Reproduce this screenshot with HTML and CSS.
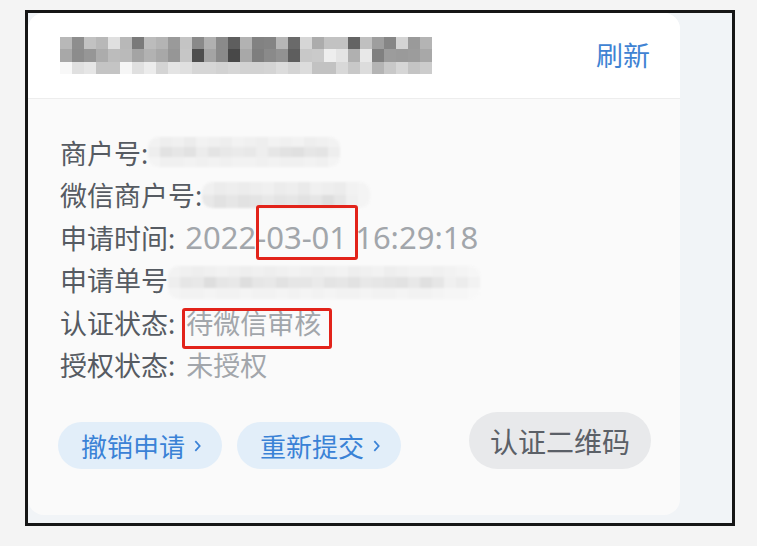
FILE: index.html
```html
<!DOCTYPE html>
<html lang="zh-CN">

<head>
    <meta charset="UTF-8">
    <meta name="viewport" content="width=device-width, initial-scale=1.0">
    <title>商户认证</title>
    <link rel="stylesheet" href="styles.css">
</head>

<body>
    <div class="frame">
        <div class="card">
            <div class="card-head">
                <div class="mosaic mosaic-title" id="titleMosaic"></div>
                <a class="refresh">刷新</a>
            </div>

            <div class="card-body">
                <div class="row">
                    <span class="label">商户号:</span>
                    <span class="mosaic mosaic-soft" id="mchMosaic"></span>
                </div>
                <div class="row">
                    <span class="label">微信商户号:</span>
                    <span class="mosaic mosaic-soft" id="wxMosaic"></span>
                </div>
                <div class="row">
                    <span class="label">申请时间:</span>
                    <span class="value value-num">2022<span class="mark mark-date">-03-01</span> 16:29:18</span>
                </div>
                <div class="row">
                    <span class="label">申请单号</span>
                    <span class="mosaic mosaic-soft" id="applyMosaic"></span>
                </div>
                <div class="row">
                    <span class="label">认证状态:</span>
                    <span class="value"><span class="mark mark-status">待微信审核</span></span>
                </div>
                <div class="row">
                    <span class="label">授权状态:</span>
                    <span class="value">未授权</span>
                </div>

                <div class="actions">
                    <button class="pill">撤销申请
                        <svg class="chevron" viewBox="0 0 10 16" width="10" height="16">
                            <path d="M2.5 2.5 L7.5 8 L2.5 13.5" />
                        </svg>
                    </button>
                    <button class="pill">重新提交
                        <svg class="chevron" viewBox="0 0 10 16" width="10" height="16">
                            <path d="M2.5 2.5 L7.5 8 L2.5 13.5" />
                        </svg>
                    </button>
                    <button class="pill pill-gray">认证二维码</button>
                </div>
            </div>
        </div>
    </div>

    <script>
        // grey levels of the pixelated (masked) texts, one string per row
        const mosaics = {
            titleMosaic: [
                'b8 8e c2 b8 e0 b8 7a bc b4 9a c4 8a b0 8a 5e b2 82 84 b6 6a d6 ac c2 c2 64 c0 9e 86 d4 9a b4',
                'a8 8c 96 ac bc ba a4 b2 a8 96 c6 4e a4 8a 48 a8 7e 8a 92 5e c8 ca ee e4 b0 e8 80 9c 9a 9c a8',
                'f8 e0 e6 c4 c4 f6 e0 ec d4 e4 e0 d6 d6 d2 d6 d2 d2 d4 dc d4 dc c2 c2 d8 c8 dc b4 c8 d6 c4 cc'
            ],
            mchMosaic: [
                'f2 ee f0 ec f2 f0 ee f2 f0 ee f2 f0 f2 ee f0 f2',
                'ee e2 e6 e2 ec e4 e8 ea e8 ee e6 e2 e0 e6 e4 ee',
                'f4 f0 f0 f2 f0 f2 f0 f2 f2 f0 f2 f0 f0 f2 f0 f4'
            ],
            wxMosaic: [
                'f0 ec ee ec ee f0 ec ee ea f0 ee ec f2 f4',
                'e8 e2 e6 e2 e4 e8 e4 e6 e2 e6 de e6 f0 f4'
            ],
            applyMosaic: [
                'f2 f0 ee f0 f2 f0 ee f0 ee f0 f2 f0 ee f0 f2 ee f0 f2 ee f0 f2 f2 f0 f2 f4 f6',
                'ee e6 e8 de e6 e8 de e6 e8 e2 e6 e6 ea e4 e6 e2 e8 e6 e4 e2 e8 e0 e6 f0 ec f2',
                'f4 f2 f2 f4 f2 f2 f4 f2 f2 f4 f2 f4 f2 f4 f2 f2 f4 f2 f2 f4 f2 f2 f4 f6 f6 f8'
            ]
        };

        Object.keys(mosaics).forEach((id) => {
            const box = document.getElementById(id);
            mosaics[id].forEach((line) => {
                const row = document.createElement('span');
                row.className = 'mosaic-row';
                line.split(' ').forEach((hex) => {
                    const cell = document.createElement('span');
                    cell.className = 'mosaic-cell';
                    cell.style.background = '#' + hex + hex + hex;
                    row.appendChild(cell);
                });
                box.appendChild(row);
            });
        });
    </script>
</body>

</html>
```

FILE: styles.css
```css
body {
    margin: 0;
    background: #f4f4f4;
    font-family: "Noto Sans", "Noto Sans CJK SC", sans-serif;
}

.frame {
    width: 704px;
    height: 510px;
    margin: 10px 0 0 25px;
    border: 3px solid #161616;
    background: #f1f4f7;
}

.card {
    width: 652px;
    height: 502px;
    background: #fafafa;
    border-radius: 16px;
    overflow: hidden;
}

.card-head {
    height: 85px;
    display: flex;
    justify-content: space-between;
    align-items: center;
    padding: 0 30px 0 32px;
    background: #fff;
    border-bottom: 1px solid #ededed;
}

.refresh {
    font-size: 27px;
    color: #3f83d3;
    line-height: 1;
}

/* pixelated masked text */
.mosaic {
    display: inline-flex;
    flex-direction: column;
    vertical-align: middle;
}

.mosaic-row {
    display: flex;
}

.mosaic-title .mosaic-cell {
    width: 12px;
    height: 12.5px;
}

.mosaic-soft {
    border-radius: 10px;
    overflow: hidden;
    filter: blur(1px);
}

.mosaic-soft .mosaic-cell {
    width: 12px;
    height: 10px;
}

#wxMosaic .mosaic-cell {
    height: 13px;
}

#applyMosaic {
    margin-top: 6px;
}

#applyMosaic .mosaic-cell {
    height: 11px;
}

.card-body {
    padding: 32px 29px 0 32px;
}

.row {
    height: 42.5px;
    display: flex;
    align-items: center;
    font-size: 27px;
    white-space: pre;
}

.label {
    color: #565b62;
}

.value {
    margin-left: 11px;
    color: #a2a6ab;
}

.value-num {
    margin-left: 10px;
    font-size: 31px;
    line-height: 1;
}

.mark {
    position: relative;
}

.mark::after {
    content: "";
    position: absolute;
    border: 3px solid #e2231a;
    border-radius: 3px;
}

.mark-date::after {
    left: 0;
    right: -11px;
    top: -11px;
    bottom: -2px;
}

.mark-status::after {
    left: -4px;
    right: -11px;
    top: 3px;
    bottom: -7px;
}

.actions {
    display: flex;
    align-items: flex-end;
    gap: 15px;
    margin: 26px 0 0 -2px;
}

.pill {
    height: 47px;
    display: flex;
    align-items: center;
    gap: 8px;
    padding: 0 20px 0 23px;
    border: none;
    border-radius: 24px;
    background: #e2eef9;
    color: #3a82d6;
    font-family: "Noto Sans CJK SC", sans-serif;
    font-size: 26px;
}

.chevron {
    fill: none;
    stroke: #3a82d6;
    stroke-width: 2;
    width: 9px;
    height: 14px;
}

.pill-gray {
    height: 57px;
    margin-left: auto;
    padding: 0 21px;
    border-radius: 29px;
    background: #e8e9eb;
    color: #5b6067;
    font-size: 28px;
}
```
